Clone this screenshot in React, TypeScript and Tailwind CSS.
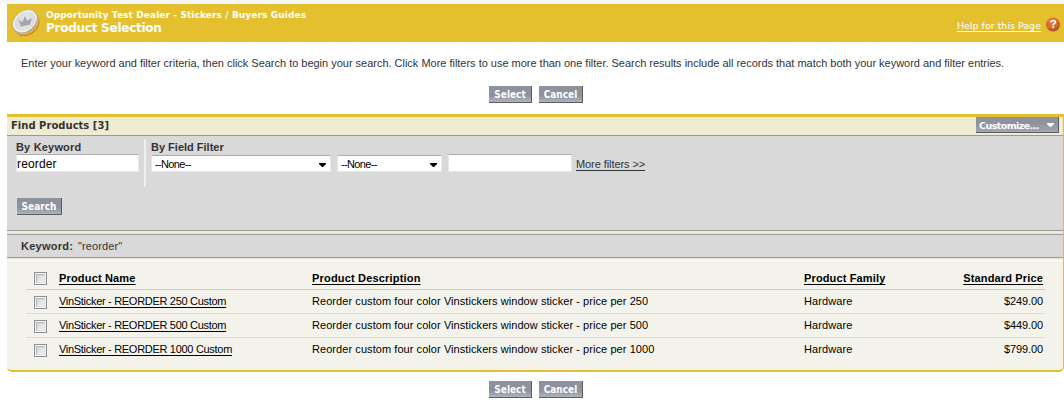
import type { ReactNode } from "react";

const verdana = "font-['DejaVu_Sans',sans-serif] font-bold";

function ActionButton({ children, width }: { children: ReactNode; width: string }) {
  return (
    <button
      className={`flex h-[17px] items-center justify-center border-r border-b border-[#5c5d61] bg-linear-to-b from-[#8d929d] from-60% to-[#afb3bc] pt-px text-[10px] leading-[15px] text-white font-['DejaVu_Sans_Condensed','DejaVu_Sans',sans-serif] font-bold ${width}`}
    >
      {children}
    </button>
  );
}

function Actions() {
  return (
    <div className="ml-[489px] flex gap-[7px]">
      <ActionButton width="w-[43px]">Select</ActionButton>
      <ActionButton width="w-[44px]">Cancel</ActionButton>
    </div>
  );
}

function CoinIcon() {
  return (
    <svg width="28" height="28" viewBox="0 0 28 28" className="shrink-0">
      <defs>
        <linearGradient id="coin" x1="0" y1="0" x2="1" y2="1">
          <stop offset="0" stopColor="#d2d4d5" />
          <stop offset="0.5" stopColor="#e2e3e3" />
          <stop offset="1" stopColor="#d6d7d8" />
        </linearGradient>
      </defs>
      <g transform="rotate(-38 14 14)">
        <ellipse cx="13.2" cy="16.6" rx="13.8" ry="10.4" fill="#b98428" />
        <ellipse cx="13.4" cy="15.4" rx="13.8" ry="10.4" fill="#e3ae58" />
        <ellipse cx="13.6" cy="13" rx="13.8" ry="10.4" fill="#a2a3a3" />
        <ellipse cx="13.6" cy="12.7" rx="13.1" ry="9.8" fill="#f1f1f1" />
        <ellipse cx="13.6" cy="12.9" rx="11.6" ry="8.5" fill="url(#coin)" />
      </g>
      <path d="M6.500 11.800l4 2.200 2.400-6 2.300 4.700 4.600-2.600-1.600 6.400-9.200 2z" fill="#a3a6a8" />
    </svg>
  );
}

function HelpIcon() {
  return (
    <svg width="14" height="15" viewBox="0 0 14 15" className="shrink-0">
      <defs>
        <radialGradient id="help" cx="0.4" cy="0.3" r="0.8">
          <stop offset="0" stopColor="#ea8248" />
          <stop offset="0.6" stopColor="#d2662e" />
          <stop offset="1" stopColor="#8d4420" />
        </radialGradient>
      </defs>
      <circle cx="7" cy="7.5" r="7" fill="url(#help)" />
      <path d="M4.900 5.300C5 4 6 3.500 7.200 3.500c1.300 0 2.200.6 2.200 1.700 0 1.400-2.200 1.400-2.200 3" fill="none" stroke="#fff" strokeWidth="1.700" />
      <path d="M6.300 9.200h1.800v1.700H6.300z" fill="#fff" />
    </svg>
  );
}

function Select({ width }: { width: string }) {
  return (
    <div className={`flex h-[17px] items-center justify-between rounded-[1px] border border-[#e3e6ee] border-t-[#abadb3] bg-white pr-[4px] pl-[3px] text-[11px] text-black ${width}`}>
      <span className="mt-px tracking-[-0.65px]">--None--</span>
      <svg width="7" height="4" viewBox="0 0 7 4" className="mt-[3px]">
        <path d="M0 0h7v1L4 4H3L0 1z" fill="#000" />
      </svg>
    </div>
  );
}

function Checkbox() {
  return (
    <span className="flex size-[13px] items-center justify-center border border-[#8e8f8f] bg-[#f4f4f4]">
      <span className="size-[9px] border border-[#b4b8bd] border-r-[#dcdfe2] border-b-[#dcdfe2] bg-linear-to-br from-[#cdd1d6] to-[#f6f6f6]" />
    </span>
  );
}

const rows = [
  { qty: "250", price: "$249.00" },
  { qty: "500", price: "$449.00" },
  { qty: "1000", price: "$799.00" },
];

const grid = "grid h-[24px] grid-cols-[33px_253px_492px_120px_1fr] border-b";
const link = "underline underline-offset-2 decoration-1";

export default function App() {
  return (
    <div className="h-[404px] w-[1064px] overflow-hidden bg-white font-['Liberation_Sans',Arial,sans-serif] text-[11px] leading-[13px] text-[#333]">
      <div className="h-[4px] bg-[#f7f7f7]" />
      <header className="ml-[7px] flex h-[38px] bg-[#e4c02f] pt-[4px] pl-[5px] text-white">
        <CoinIcon />
        <div className={`ml-[6px] flex-1 ${verdana}`}>
          <div className="pt-px text-[9px] leading-[12px] tracking-[0.1px]"><span>Opportunity Test Dealer - Stickers / Buyers Guides</span></div>
          <h1 className="text-[12px] leading-[14px] tracking-[-0.25px]"><span>Product Selection</span></h1>
        </div>
        <div className="flex pt-[8px] pr-[4px]">
          <a className="mt-[4px] text-[9.5px] leading-[12px] underline underline-offset-2 font-['DejaVu_Sans',sans-serif]">Help for this Page</a>
          <div className="mt-px ml-[5px]"><HelpIcon /></div>
        </div>
      </header>

      <p className="mt-[15px] ml-[21px] tracking-[-0.015px] whitespace-nowrap"><span>Enter your keyword and filter criteria, then click Search to begin your search. Click More filters to use more than one filter. Search results include all records that match both your keyword and filter entries.</span></p>
      <div className="mt-[16px]"><Actions /></div>

      <main className="mt-[11px] ml-[7px] h-[258px] overflow-hidden rounded-b-[5px] border-t-3 border-r border-b-2 border-[#e4c02f] bg-[#f3f3ec]">
        <div className="flex h-[19px] items-start justify-between border-b border-[#999] bg-[#eeecd2] pr-[4px] pl-[4px]">
          <h2 className={`mt-[2px] text-[10px] ${verdana} tracking-[0.02px]`}><span>Find Products [3]</span></h2>
          <button className={`flex h-[16px] w-[83px] items-center justify-between border-r border-b border-[#5c5d61] bg-linear-to-b from-[#8d929d] from-40% to-[#a2a6b0] pr-[4px] pl-[3px] text-[9.5px] text-white ${verdana}`}>
            <span className="mt-px tracking-[-0.55px]">Customize...</span>
            <svg width="7" height="4" viewBox="0 0 7 4"><path d="M0 0h7v1L4 4H3L0 1z" fill="#fff" /></svg>
          </button>
        </div>

        <section className="h-[95px] border-b border-[#999] bg-[#d9d9d9] pt-[3px]">
          <div className="flex h-[48px]">
            <div className="w-[130px] pt-[2px] pl-[9px]">
              <div className="font-bold tracking-[0.18px]"><span>By Keyword</span></div>
              <div className="h-[18px] w-[123px] rounded-[1px] border border-[#e3e6ee] border-t-[#abadb3] bg-white text-[12px] leading-[18px] tracking-[0.15px] text-black"><span>reorder</span></div>
            </div>
            <div className="ml-[7px] w-[2px] bg-[#efefef]" />
            <div className="pt-[2px] pl-[5px]">
              <div className="font-bold"><span>By Field Filter</span></div>
              <div className="flex h-[18px] items-end">
                <Select width="w-[180px]" />
                <div className="ml-[6px]"><Select width="w-[105px]" /></div>
                <div className="ml-[6px] h-[18px] w-[124px] rounded-[1px] border border-[#e3e6ee] border-t-[#abadb3] bg-white" />
                <a className={`mb-px ml-[4px] tracking-[-0.08px] whitespace-nowrap ${link}`}>More filters &gt;&gt;</a>
              </div>
            </div>
          </div>
          <div className="mt-[11px] ml-[10px]"><ActionButton width="w-[45px]">Search</ActionButton></div>
        </section>

        <div className="h-[3px] bg-[#eeecd2]" />
        <div className="flex h-[24px] items-center border-y border-[#999] bg-[#d9d9d9] pl-[14px]">
          <b className="w-[57px] tracking-[0.25px]"><span>Keyword:</span></b><span className="tracking-[0.1px]">"reorder"</span>
        </div>
        <div className="h-[3px] border-b border-white bg-[#eeecd2]" />

        <div className="mt-[5px] ml-[19px] w-[1019px] text-black">
          <div className={`${grid} border-[#ccc] font-bold`}>
            <div className="pt-[6px] pl-[8px]"><Checkbox /></div>
            <div className="pt-[6px]"><a className={`${link} tracking-[0.17px]`}>Product Name</a></div>
            <div className="pt-[6px]"><a className={`${link} tracking-[0.18px]`}>Product Description</a></div>
            <div className="pt-[6px]"><a className={`${link} tracking-[0.14px]`}>Product Family</a></div>
            <div className="pt-[6px] pr-[2px] text-right"><a className={`${link} tracking-[0.15px]`}>Standard Price</a></div>
          </div>
          {rows.map(({ qty, price }) => (
            <div key={qty} className={`${grid} border-[#e3deb8] last:border-transparent`}>
              <div className="pt-[6px] pl-[8px]"><Checkbox /></div>
              <div className="pt-[5px]"><a className={`${link} tracking-[-0.3px]`}>VinSticker - REORDER {qty} Custom</a></div>
              <div className="pt-[5px]"><span className="tracking-[0.065px]">Reorder custom four color Vinstickers window sticker - price per {qty}</span></div>
              <div className="pt-[5px]"><span className="tracking-[0.1px]">Hardware</span></div>
              <div className="pt-[5px] pr-[2px] text-right"><span className="tracking-[-0.1px]">{price}</span></div>
            </div>
          ))}
        </div>
      </main>
      <div className="mt-[9px]"><Actions /></div>
    </div>
  );
}
